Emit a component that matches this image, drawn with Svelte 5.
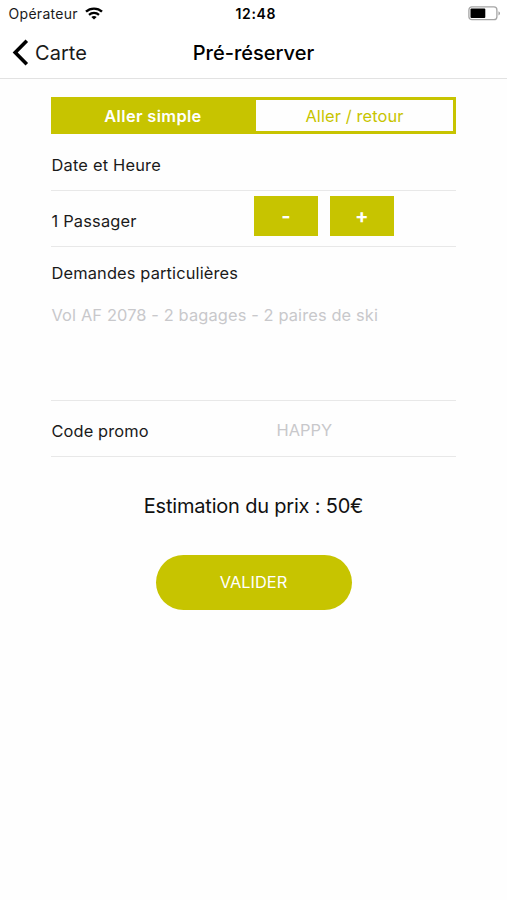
<script>
  let passengers = $state(1);
  let trip = $state('simple');
</script>

<main>
  <header>
    <div class="status">
      <div class="carrier">
        <span>Opérateur</span>
        <svg width="18" height="13" viewBox="0 0 18 13" fill="none" stroke="#000">
          <path d="M1 4.7C5.4.6 12.6.6 17 4.7" stroke-width="2.4" />
          <path d="M4 7.9C6.8 5.3 11.2 5.3 14 7.9" stroke-width="2.2" />
          <path d="M9 12.4 6.3 9.9C7.9 8.6 10.1 8.6 11.7 9.9Z" fill="#000" stroke="none" />
        </svg>
      </div>
      <time>12:48</time>
      <div class="battery">
        <svg width="33" height="15" viewBox="0 0 33 15">
          <rect x=".9" y=".9" width="28" height="12.8" rx="3" fill="#fff" stroke="#a5a5a5" stroke-width="1.3" />
          <rect x="2.5" y="2.6" width="14.8" height="9.4" rx="1" fill="#000" />
          <path d="M30.5 5.2c2 .8 2 3.4 0 4.2z" fill="#999" />
        </svg>
      </div>
    </div>
    <nav>
      <button class="back">
        <svg width="17" height="27" viewBox="0 0 17 27" fill="none" stroke="#000" stroke-width="3.6">
          <path d="M14.8 1.8 3.2 13.5 14.8 25.2" />
        </svg>
        <span>Carte</span>
      </button>
      <h1>Pré-réserver</h1>
    </nav>
  </header>

  <form onsubmit={(e) => e.preventDefault()}>
    <div class="segments">
      <button type="button" class:active={trip === 'simple'} onclick={() => (trip = 'simple')}>Aller simple</button>
      <button type="button" class:active={trip === 'retour'} onclick={() => (trip = 'retour')}>Aller / retour</button>
    </div>
    <div class="row date"><span>Date et Heure</span></div>
    <div class="row people">
      <span class="count">{passengers} Passager</span>
      <div class="stepper">
        <button type="button" onclick={() => (passengers = Math.max(1, passengers - 1))}>-</button>
        <button type="button" onclick={() => passengers++}>+</button>
      </div>
    </div>
    <div class="row requests">
      <span>Demandes particulières</span>
      <p>Vol AF 2078 - 2 bagages - 2 paires de ski</p>
    </div>
    <div class="row promo">
      <span>Code promo</span>
      <em>HAPPY</em>
    </div>
    <div class="price">Estimation du prix : 50€</div>
    <button class="submit">VALIDER</button>
  </form>
</main>

<style>
  :global(body) { background: #fff; }
  main {
    width: 507px;
    height: 900px;
    overflow: hidden;
    background: #fefefe;
    color: #1a1a1a;
    font: 16.4px/22px Inter, "Liberation Sans", sans-serif;
  }
  button {
    margin: 0;
    padding: 0;
    border: 0;
    background: none;
    color: inherit;
    font: inherit;
    letter-spacing: inherit;
  }
  header {
    box-sizing: border-box;
    height: 79px;
    background: #fff;
    border-bottom: 1px solid #e2e2e2;
  }
  .status {
    display: grid;
    grid-template-columns: 1fr auto 1fr;
    align-items: center;
    height: 27px;
    padding: 0 6px 0 8.5px;
    font-size: 14px;
  }
  .carrier { display: flex; align-items: center; gap: 7px; letter-spacing: .3px; }
  .carrier svg { margin-top: -1px; }
  time { padding-left: 2px; color: #000; font-weight: 600; letter-spacing: .6px; }
  .battery { display: flex; justify-content: flex-end; }
  nav {
    display: grid;
    grid-template-columns: 1fr auto 1fr;
    align-items: center;
    height: 50px;
    padding: 0 12px;
    font-size: 20px;
  }
  .back { display: flex; align-items: center; gap: 6px; letter-spacing: .05px; }
  .back span, h1 { padding-top: 1px; }
  h1 { margin: 0; font-size: 20px; font-weight: 500; color: #000; }
  form {
    display: flex;
    flex-direction: column;
    width: 405px;
    margin: 18px 0 0 51px;
    letter-spacing: .2px;
  }
  .segments {
    display: flex;
    box-sizing: border-box;
    height: 37px;
    border: 3px solid #c7c400;
  }
  .segments button { flex: 1; padding-top: 1px; color: #c7c400; letter-spacing: .12px; }
  .segments button:first-child { flex: 0 0 202px; padding-right: 4px; box-sizing: border-box; }
  .segments button.active { background: #c7c400; color: #fff; font-weight: 600; letter-spacing: .35px; }
  .row { box-sizing: border-box; border-bottom: 1px solid #e8e8e8; }
  .row > span { padding-left: .5px; }
  .date { height: 57px; padding-top: 20px; }
  .people { display: flex; height: 56px; }
  .people .count { width: 202.5px; padding-top: 19px; }
  .stepper { display: flex; gap: 12px; padding-top: 5px; }
  .stepper button {
    width: 64px;
    height: 40px;
    padding-bottom: 1px;
    background: #c7c400;
    color: #fff;
    font-size: 20px;
    font-weight: 700;
  }
  .requests { height: 154px; padding-top: 15px; letter-spacing: .15px; }
  p { margin: 20px 0 0; padding-left: .5px; color: #c8c8cb; letter-spacing: .13px; }
  .promo { display: flex; height: 56px; padding-top: 19px; letter-spacing: .12px; }
  .promo span { width: 225px; }
  em { margin-top: -1px; color: #c8c8cb; font-style: normal; letter-spacing: 0; }
  .price {
    margin-top: 37px;
    font-size: 20px;
    line-height: 24px;
    letter-spacing: -.2px;
    text-align: center;
    color: #111;
  }
  .submit {
    box-sizing: border-box;
    align-self: center;
    width: 196px;
    height: 55px;
    margin-top: 37px;
    padding-bottom: 2px;
    border-radius: 28px;
    background: #c7c400;
    color: #fff;
    letter-spacing: 0;
  }
</style>
